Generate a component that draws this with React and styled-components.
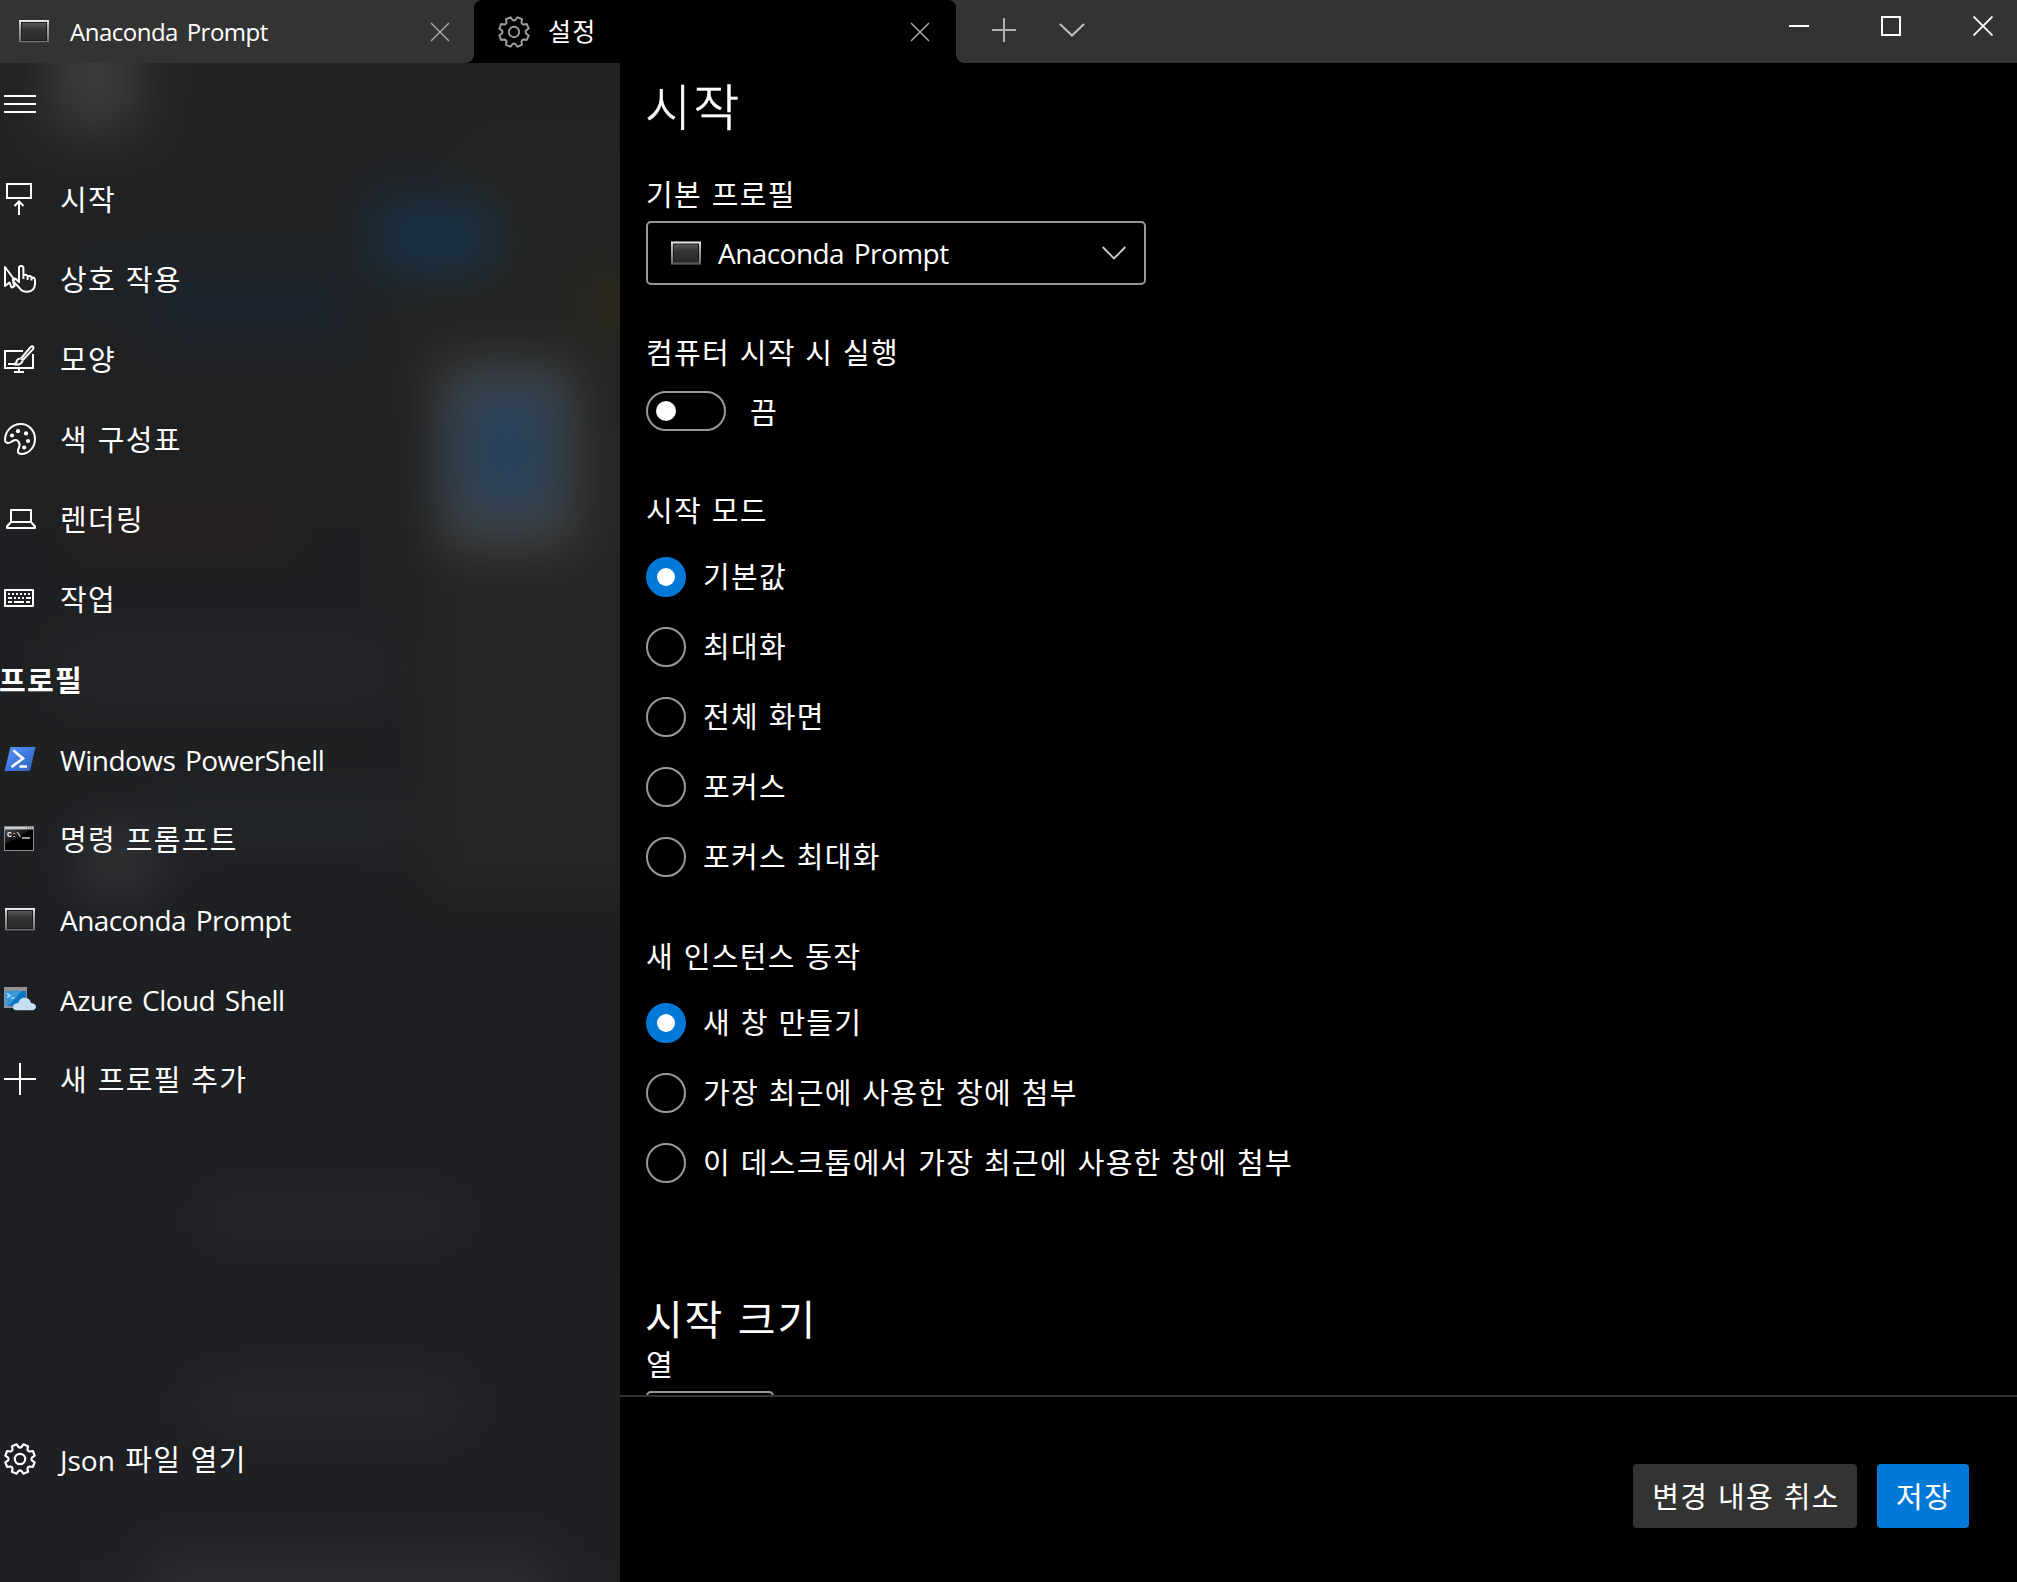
import React from "react";
import styled, { createGlobalStyle, css } from "styled-components";

const Global = createGlobalStyle`
  * { box-sizing: border-box; }
  html, body { margin: 0; background: #000; overflow: hidden; }
  body, button {
    color: #fff;
    font-family: "Open Sans", "Noto Sans CJK KR", sans-serif;
    font-size: 29px;
  }
`;

const Window = styled.div`
  width: 2017px;
  height: 1582px;
  display: flex;
  flex-direction: column;
  background: #000;
  overflow: hidden;
`;

const TitleBar = styled.header`
  height: 63px;
  flex: none;
  display: flex;
  background: #333;
`;

const curve = css`
  content: "";
  position: absolute;
  bottom: 0;
  width: 8px;
  height: 8px;
`;

const Tab = styled.div`
  position: relative;
  width: ${(p) => p.$width}px;
  height: 63px;
  padding: 0 ${(p) => p.$end}px 0 ${(p) => p.$pad}px;
  display: flex;
  align-items: center;
  ${(p) =>
    p.$active &&
    css`
      background: #000;
      border-radius: 8px 8px 0 0;
      &::before {
        ${curve}
        left: -8px;
        background: radial-gradient(circle at 0 0, transparent 7.5px, #000 8px);
      }
      &::after {
        ${curve}
        right: -8px;
        background: radial-gradient(circle at 100% 0, transparent 7.5px, #000 8px);
      }
    `}
`;

const TabTitle = styled.span`
  flex: 1;
  margin-left: ${(p) => p.$gap}px;
  padding-bottom: 2px;
  line-height: 34px;
  white-space: pre;
`;

const Hangul = styled.span`
  font-size: ${(p) => p.$size || 29}px;
  font-weight: ${(p) => p.$weight || 400};
  letter-spacing: 0.045em;
  word-spacing: 0.03em;
  white-space: pre;
`;

const Latin = styled.span`
  font-size: ${(p) => p.$size || 28}px;
  letter-spacing: ${(p) => p.$track ?? -0.56}px;
  word-spacing: 3px;
  white-space: pre;
`;

const TabActions = styled.div`
  display: flex;
  align-items: center;
  gap: 42px;
  padding: 0 0 3px 35px;
  flex: 1;
`;

const Caption = styled.div`
  display: flex;
  height: 52px;
  align-items: center;
  gap: 72px;
  padding-right: 24px;
`;

const Body = styled.div`
  flex: 1;
  min-height: 0;
  display: flex;
`;

const Nav = styled.nav`
  position: relative;
  isolation: isolate;
  width: 620px;
  flex: none;
  display: flex;
  flex-direction: column;
  overflow: hidden;
  background: #1f2123;
`;

const Backdrop = styled.svg`
  position: absolute;
  inset: 0;
  z-index: -1;
`;

const NavTop = styled.div`
  height: 97px;
  padding: 32px 0 0 4px;
  display: flex;
  align-items: flex-start;
`;

const NavRow = styled.div`
  height: 80px;
  flex: none;
  padding-left: 4px;
  display: flex;
  align-items: center;
`;

const NavIcon = styled.span`
  position: relative;
  width: 56px;
  flex: none;
  display: flex;
  margin-bottom: 2px;
`;

const NavLabel = styled.span`
  line-height: 40px;
`;

const NavHeader = styled.div`
  height: 80px;
  padding-bottom: 2px;
  margin-left: -1px;
  display: flex;
  align-items: center;
`;

const Spacer = styled.div`
  flex: 1;
`;

const NavFooter = styled.div`
  height: 162px;
`;

const Main = styled.main`
  flex: 1;
  display: flex;
  flex-direction: column;
  background: #000;
`;

const Content = styled.section`
  height: 1332px;
  overflow: hidden;
  padding-left: 26px;
`;

const Title = styled.h1`
  margin: 0 0 0 -1px;
  height: 91px;
  line-height: 81px;
  font-weight: 400;
  -webkit-text-stroke: 0.5px #fff;
`;

const Subtitle = styled.h2`
  margin: 108px 0 0 -1px;
  height: 54px;
  line-height: 56px;
  font-weight: 400;
`;

const FieldLabel = styled.div`
  height: 40px;
  line-height: 40px;
  margin-top: ${(p) => p.$top || 0}px;
`;

const Select = styled.div`
  width: 500px;
  height: 64px;
  margin-top: 6px;
  padding: 0 18px 0 23px;
  display: flex;
  align-items: center;
  border: 2px solid #999;
  border-radius: 5px;
`;

const SelectValue = styled.span`
  flex: 1;
  margin-left: 17px;
  line-height: 36px;
`;

const ToggleRow = styled.div`
  display: flex;
  align-items: center;
  gap: 24px;
  height: 40px;
  margin-top: 18px;
`;

const Toggle = styled.span`
  width: 80px;
  height: 40px;
  padding-left: 8px;
  display: flex;
  align-items: center;
  border: 2px solid #999;
  border-radius: 20px;
  &::after {
    content: "";
    width: 20px;
    height: 20px;
    border-radius: 50%;
    background: #fff;
  }
`;

const Radios = styled.div`
  margin-top: 26px;
  display: flex;
  flex-direction: column;
  gap: 30px;
`;

const RadioRow = styled.div`
  height: 40px;
  display: flex;
  align-items: center;
  gap: 17px;
  line-height: 40px;
`;

const RadioDot = styled.span`
  width: 40px;
  height: 40px;
  flex: none;
  display: flex;
  align-items: center;
  justify-content: center;
  border: 2px solid ${(p) => (p.$on ? "#0078d7" : "#999")};
  border-radius: 50%;
  background: ${(p) => (p.$on ? "#0078d7" : "transparent")};
  &::after {
    content: "";
    width: ${(p) => (p.$on ? 18 : 0)}px;
    height: ${(p) => (p.$on ? 18 : 0)}px;
    border-radius: 50%;
    background: #fff;
  }
`;

const NumberBox = styled.div`
  width: 128px;
  height: 64px;
  margin-top: 6px;
  border: 2px solid #999;
  border-radius: 5px;
`;

const Footer = styled.footer`
  flex: 1;
  border-top: 2px solid #333;
  padding: 67px 48px 0 0;
  display: flex;
  justify-content: flex-end;
  gap: 20px;
`;

const Button = styled.button`
  width: ${(p) => p.$width}px;
  height: 64px;
  padding: 0 0 3px 2px;
  border: 0;
  border-radius: 4px;
  background: ${(p) => (p.$primary ? "#0078d7" : "#333")};
`;

const Svg = ({ w = 32, h = 32, children, ...rest }) => (
  <svg width={w} height={h} viewBox={`0 0 ${w} ${h}`} fill="none" stroke="#fff" strokeWidth="2" {...rest}>
    {children}
  </svg>
);

// Blurred desktop seen through the acrylic pane: [x, y, width, height, colour]
const SHAPES = [
  [460, 60, 400, 160, "#242422"],
  [400, 220, 400, 130, "#242422"],
  [430, 350, 400, 480, "#272624"],
  [50, -200, 90, 270, "#393b3d"],
  [376, 140, 118, 68, "#183349"],
  [150, 218, 200, 50, "#1b2431"],
  [590, 210, 300, 60, "#2e281e"],
  [70, 435, 230, 55, "#272021"],
  [60, 575, 330, 60, "#242629"],
  [80, 770, 75, 62, "#333436"],
  [160, 735, 250, 50, "#23262a"],
  [200, 1120, 260, 60, "#242529"],
  [200, 1320, 260, 44, "#28292d"],
  [150, 1490, 400, 300, "#2c2d30"],
  [440, 300, 134, 182, "#434649"],
  [464, 330, 88, 116, "#27425c"],
];

const Wallpaper = () => (
  <Backdrop width="620" height="1519" viewBox="0 0 620 1519">
    <defs>
      <linearGradient id="base" x1="0" y1="0" x2="0" y2="1">
        <stop offset="0" stopColor="#212325" />
        <stop offset="0.3" stopColor="#1f2123" />
        <stop offset="0.6" stopColor="#1e1f22" />
        <stop offset="1" stopColor="#202124" />
      </linearGradient>
      <filter
        id="acrylic"
        filterUnits="userSpaceOnUse"
        colorInterpolationFilters="sRGB"
        x="-200"
        y="-200"
        width="1020"
        height="1919"
      >
        <feGaussianBlur stdDeviation="25" />
      </filter>
    </defs>
    <g filter="url(#acrylic)">
      <rect x="-200" y="-200" width="1020" height="1919" fill="url(#base)" />
      {SHAPES.map(([x, y, w, h, c]) => (
        <rect key={`${x}-${y}`} x={x} y={y} width={w} height={h} fill={c} />
      ))}
    </g>
  </Backdrop>
);

const polar = (r, deg) => {
  const a = (deg * Math.PI) / 180;
  return `${(16 + r * Math.cos(a)).toFixed(2)} ${(16 + r * Math.sin(a)).toFixed(2)}`;
};
const gearPath =
  Array.from({ length: 8 }, (_, i) => {
    const a = 22.5 + i * 45;
    return `${i ? "L" : "M"}${polar(12.3, a - 15)}L${polar(15.1, a - 9.5)}L${polar(15.1, a + 9.5)}L${polar(12.3, a + 15)}Q${polar(10.8, a + 22.5)} ${polar(12.3, a + 30)}`;
  }).join("") + "Z";

const Gear = ({ color = "#fff", sw = 2.2 }) => (
  <Svg stroke={color} strokeWidth={sw} strokeLinejoin="round">
    <path d={gearPath} />
    <circle cx="16" cy="16" r="5.2" />
  </Svg>
);

const Console = ({ w = 30, h = 23 }) => (
  <svg width={w} height={h} viewBox="0 0 30 23" stroke="none">
    <defs>
      <linearGradient id="frame" x1="0" y1="0" x2="0" y2="1">
        <stop offset="0" stopColor="#eee" />
        <stop offset="0.25" stopColor="#b4b4b6" />
        <stop offset="1" stopColor="#6c6d70" />
      </linearGradient>
      <linearGradient id="screen" x1="0" y1="0" x2="0" y2="1">
        <stop offset="0" stopColor="#58595b" />
        <stop offset="0.4" stopColor="#343437" />
        <stop offset="1" stopColor="#2b2b2e" />
      </linearGradient>
    </defs>
    <rect width="30" height="23" fill="url(#frame)" />
    <rect x="2" y="2" width="26" height="19" fill="#1c1c1e" />
    <rect x="3" y="3" width="24" height="17" fill="url(#screen)" />
    <path d="M0 22.5H30" stroke="#3c3d40" strokeWidth="1" />
  </svg>
);

const StartupIcon = () => (
  <Svg>
    <path d="M3 1H27V15H3Z" />
    <path d="M15 32V19M10.5 23L15 18.5L19.5 23" />
  </Svg>
);

const InteractionIcon = () => (
  <Svg strokeLinejoin="round" strokeWidth="2">
    <path d="M11 17.5L1 4V23L5.5 19.5L7.5 24.5L10.5 23.2L9 18.5" />
    <path d="M15 20L15 5Q15 3 17 3Q19.4 3 19.4 5V16M19.4 12.2Q23.5 11 23.6 14V17M23.6 13.4Q27.4 12.2 27.5 15V17.5M27.5 14.6Q31 14 31 17.5V21Q30.5 28.5 23.5 28.7Q18 29 15.5 25L9.5 18.6Q8 16.8 9.8 15.8Q11.2 15.2 12.5 16.5L15 19" />
  </Svg>
);

const AppearanceIcon = () => (
  <Svg strokeWidth="2">
    <path d="M19 8H1V25H29V11M15 25V29M10 29H20" />
    <path d="M17 15.5L26.5 4.2Q28 2.6 29.2 3.8Q30.2 5 28.8 6.4L18.6 17.2M17 15.5Q18.5 16 18.6 17.4M16.5 15.6Q12.6 16 12.4 19.3Q12 21.2 9 21Q16.8 23.2 18.6 17.8" />
    <path d="M4 21H12" />
  </Svg>
);

const PaletteIcon = () => (
  <Svg>
    <path d="M1 17.2C1 8 8 1 17 1C25 1 31 8 31 16C31 25 24 31 17.5 31C13.5 31 13 28.2 14.8 25C17 20.5 14 15.6 9.5 17.5C7 18.8 6 20.3 4 20C2 19.7 1 18.8 1 17.2Z" />
    <g fill="#fff" stroke="none">
      <circle cx="8" cy="12.5" r="2.1" />
      <circle cx="14" cy="8.2" r="2.1" />
      <circle cx="22" cy="10.4" r="2.1" />
      <circle cx="24" cy="18" r="2.1" />
      <circle cx="20.2" cy="24.5" r="2.1" />
    </g>
  </Svg>
);

const LaptopIcon = () => (
  <Svg strokeLinejoin="round">
    <path d="M7 7H27V19H7ZM7 19L3 23.5V25H31V23.5L27 19" />
  </Svg>
);

const KeyboardIcon = () => (
  <Svg>
    <path d="M1 7H29V23H1Z" strokeLinejoin="round" />
    <path d="M4 11H27" strokeDasharray="2 2" />
    <path d="M4 15H27" strokeDasharray="4 2 2 2 2 2 2 2 5" />
    <path d="M4 19H8M10 19H20M22 19H26" />
  </Svg>
);

const PowerShellIcon = () => (
  <Svg stroke="none">
    <defs>
      <linearGradient id="ps" x1="0" y1="0" x2="1" y2="1">
        <stop offset="0" stopColor="#5a9aff" />
        <stop offset="0.5" stopColor="#3f78e0" />
        <stop offset="1" stopColor="#3563b4" />
      </linearGradient>
    </defs>
    <path d="M6.5 4H31.5L26 28H0.5Z" fill="url(#ps)" />
    <path d="M9.5 7.5L19 15.5L7.5 24M15.5 23.5H23" stroke="#fff" strokeWidth="2.6" />
  </Svg>
);

const CmdLetters = styled.span`
  position: absolute;
  left: 3px;
  top: 7px;
  font: bold 8px/10px "Liberation Mono", monospace;
`;

const CmdIcon = () => (
  <>
    <Svg stroke="none">
      <defs>
        <linearGradient id="cmd" x1="0" y1="0" x2="0.7" y2="1">
          <stop offset="0.1" stopColor="#4a4a4a" />
          <stop offset="0.5" stopColor="#151515" />
          <stop offset="0.52" stopColor="#000" />
        </linearGradient>
      </defs>
      <rect x="0.5" y="3.5" width="29" height="24" fill="url(#cmd)" stroke="#858a8f" strokeWidth="1" />
      <rect x="1" y="4" width="28" height="2.4" fill="#c9cccf" />
      <path d="M23 5H28" stroke="#555" strokeWidth="1" strokeDasharray="1 1" />
      <path d="M18 15H26" stroke="#fff" strokeWidth="1.2" />
    </Svg>
    <CmdLetters>C:\</CmdLetters>
  </>
);

const AzureIcon = () => (
  <Svg stroke="none">
    <rect x="0" y="4" width="23" height="21" fill="#8f9296" />
    <rect x="1" y="8" width="21" height="15" fill="#0b75c6" />
    <path d="M1 8H18L4 23H1Z" fill="#3b97dc" />
    <path d="M3 10.5L6 12.5L3 14.5M7 15H11" stroke="#cfe6f7" strokeWidth="1.2" />
    <path d="M12.5 27.2C9 27.2 8.2 24.5 9.3 22.5C10.2 20.6 12 20 14 20.2C15 16.5 17.8 14.4 21.5 14.8C24.8 15.2 26.5 17.5 27 20C30.5 20.2 32 22 32 24C31.8 26 30.3 27.2 28 27.2Z" fill="#c3dff1" />
  </Svg>
);

const NAV = [
  [StartupIcon, "시작"],
  [InteractionIcon, "상호 작용"],
  [AppearanceIcon, "모양"],
  [PaletteIcon, "색 구성표"],
  [LaptopIcon, "렌더링"],
  [KeyboardIcon, "작업"],
];

const LAUNCH = ["기본값", "최대화", "전체 화면", "포커스", "포커스 최대화"];
const INSTANCE = ["새 창 만들기", "가장 최근에 사용한 창에 첨부", "이 데스크톱에서 가장 최근에 사용한 창에 첨부"];

const NavItem = ({ icon: Icon, label, latin }) => (
  <NavRow>
    <NavIcon>
      <Icon />
    </NavIcon>
    <NavLabel>{latin ? <Latin>{label}</Latin> : <Hangul>{label}</Hangul>}</NavLabel>
  </NavRow>
);

const RadioGroup = ({ items }) => (
  <Radios>
    {items.map((label, i) => (
      <RadioRow key={label}>
        <RadioDot $on={i === 0} />
        <Hangul>{label}</Hangul>
      </RadioRow>
    ))}
  </Radios>
);

const ConsoleItemIcon = () => (
  <Svg>
    <g transform="translate(1 5)">
      <Console />
    </g>
  </Svg>
);

const PlusIcon = () => (
  <Svg>
    <path d="M16 0V32M0 16H32" />
  </Svg>
);

const CloseIcon = () => (
  <Svg w={20} h={20} stroke="#a8a8a8" strokeWidth="1.5">
    <path d="M1 1L19 19M19 1L1 19" />
  </Svg>
);

export default function App() {
  return (
    <Window>
      <Global />
      <TitleBar>
        <Tab $width={474} $pad={19} $end={24}>
          <Console w={30} h={23} />
          <TabTitle $gap={21}>
            <Latin $size={24} $track={-0.5}>Anaconda Prompt</Latin>
          </TabTitle>
          <CloseIcon />
        </Tab>
        <Tab $active $width={482} $pad={24} $end={26}>
          <Gear color="#a0a0a0" sw={1.9} />
          <TabTitle $gap={18}>
            <Hangul $size={25}>설정</Hangul>
          </TabTitle>
          <CloseIcon />
        </Tab>
        <TabActions>
          <Svg w={26} h={26} stroke="#b0b0b0">
            <path d="M13 1V25M1 13H25" />
          </Svg>
          <Svg w={26} h={14} stroke="#c0c0c0">
            <path d="M1 1L13 12.5L25 1" />
          </Svg>
        </TabActions>
        <Caption>
          <Svg w={20} h={20}>
            <path d="M0 10H20" />
          </Svg>
          <Svg w={20} h={20}>
            <path d="M1 1H19V19H1Z" />
          </Svg>
          <Svg w={20} h={20} strokeWidth="1.8">
            <path d="M0.5 0.5L19.5 19.5M19.5 0.5L0.5 19.5" />
          </Svg>
        </Caption>
      </TitleBar>
      <Body>
        <Nav>
          <Wallpaper />
          <NavTop>
            <Svg w={32} h={18}>
              <path d="M0 1H32M0 9H32M0 17H32" />
            </Svg>
          </NavTop>
          {NAV.map(([icon, label]) => (
            <NavItem key={label} icon={icon} label={label} />
          ))}
          <NavHeader>
            <Hangul $weight={700}>프로필</Hangul>
          </NavHeader>
          <NavItem icon={PowerShellIcon} label="Windows PowerShell" latin />
          <NavItem icon={CmdIcon} label="명령 프롬프트" />
          <NavItem icon={ConsoleItemIcon} label="Anaconda Prompt" latin />
          <NavItem icon={AzureIcon} label="Azure Cloud Shell" latin />
          <NavItem icon={PlusIcon} label="새 프로필 추가" />
          <Spacer />
          <NavFooter>
            <NavRow>
              <NavIcon>
                <Gear />
              </NavIcon>
              <NavLabel>
                <Latin $track={0}>Json </Latin>
                <Hangul>파일 열기</Hangul>
              </NavLabel>
            </NavRow>
          </NavFooter>
        </Nav>
        <Main>
          <Content>
            <Title>
              <Hangul $size={50} $weight={300}>시작</Hangul>
            </Title>
            <FieldLabel $top={21}>
              <Hangul>기본 프로필</Hangul>
            </FieldLabel>
            <Select>
              <Console w={30} h={24} />
              <SelectValue>
                <Latin>Anaconda Prompt</Latin>
              </SelectValue>
              <Svg w={24} h={14} stroke="#d0d0d0" strokeWidth="1.8">
                <path d="M0.7 1L12 12.5L23.3 1" />
              </Svg>
            </Select>
            <FieldLabel $top={48}>
              <Hangul>컴퓨터 시작 시 실행</Hangul>
            </FieldLabel>
            <ToggleRow>
              <Toggle />
              <Hangul>끔</Hangul>
            </ToggleRow>
            <FieldLabel $top={60}>
              <Hangul>시작 모드</Hangul>
            </FieldLabel>
            <RadioGroup items={LAUNCH} />
            <FieldLabel $top={60}>
              <Hangul>새 인스턴스 동작</Hangul>
            </FieldLabel>
            <RadioGroup items={INSTANCE} />
            <Subtitle>
              <Hangul $size={41}>시작 크기</Hangul>
            </Subtitle>
            <FieldLabel>
              <Hangul>열</Hangul>
            </FieldLabel>
            <NumberBox />
          </Content>
          <Footer>
            <Button $width={224}>
              <Hangul>변경 내용 취소</Hangul>
            </Button>
            <Button $width={92} $primary>
              <Hangul>저장</Hangul>
            </Button>
          </Footer>
        </Main>
      </Body>
    </Window>
  );
}
